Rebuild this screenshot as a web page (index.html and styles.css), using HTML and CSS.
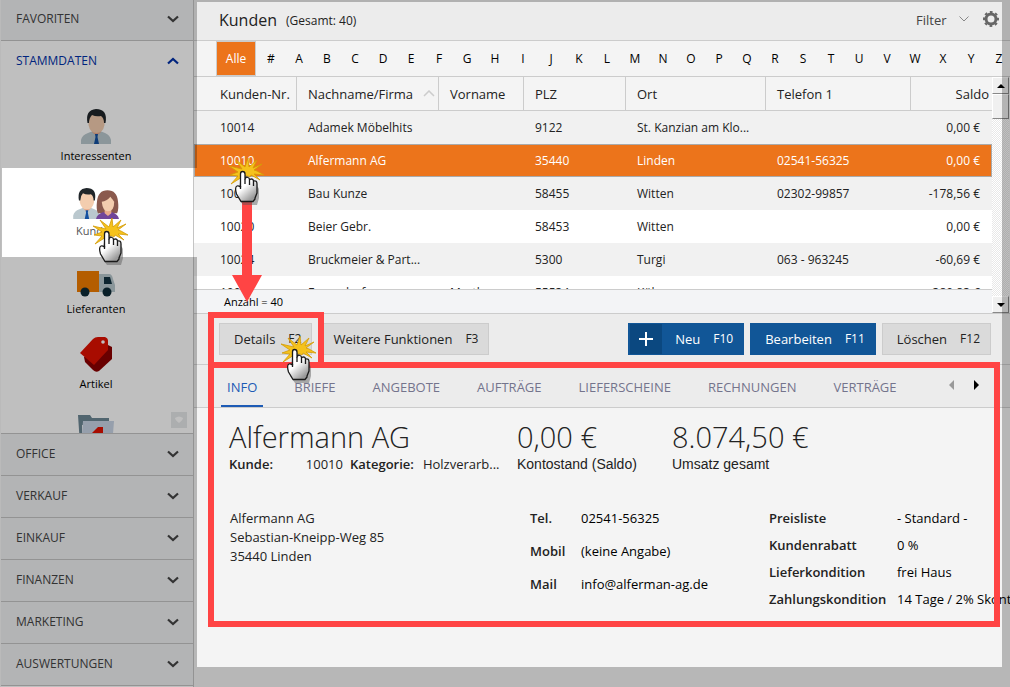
FILE: index.html
```html
<!DOCTYPE html>
<html lang="de">
<head>
    <meta charset="UTF-8">
    <meta name="viewport" content="width=device-width, initial-scale=1.0">
    <title>Kunden</title>
    <link rel="stylesheet" href="styles.css">
</head>
<body>
    <!-- Shared shapes -->
    <svg class="defs" width="0" height="0">
        <linearGradient id="glove" x1="0" y1="0" x2="0.600" y2="1">
            <stop offset="0.550" stop-color="#fff"/>
            <stop offset="1" stop-color="#999"/>
        </linearGradient>
        <symbol id="down" viewBox="0 0 12 8">
            <path d="M1 1.500 L6 6 L11 1.500" fill="none" stroke="currentColor" stroke-width="2.200"/>
        </symbol>
        <symbol id="man" viewBox="0 0 30 35">
            <path d="M0 35 V31 Q1 26 7 24 L12 22 H19 L24 24 Q29 26 30 31 V35 Z" fill="#bac8ce"/>
            <path d="M11 20 H20 V23 L15.500 27 L11 23 Z" fill="#e8a98a"/>
            <path d="M7.500 11 Q7.500 3 15 3 Q23.500 3 23.500 11 V16 Q22 24 15.500 24 Q9 24 7.500 16 Z" fill="#f3cdaf"/>
            <path d="M6.500 14 Q4 1 15 0 Q27 0 24.500 14 H23 Q23 9 20 7 Q15 8 11 6 Q8 9 8 14 Z" fill="#20262a"/>
            <path d="M14 25 H17 L16.500 28 L18 35 H13 L14.500 28 Z" fill="#1450a0"/>
        </symbol>
        <symbol id="woman" viewBox="0 0 24 30">
            <path d="M2 24 Q0 20 1 12 Q2 0 12 0 Q22 0 23 12 Q24 20 22 24 Z" fill="#8a594d"/>
            <path d="M0 30 Q1 25 7 23 H17 Q23 25 24 30 Z" fill="#71459a"/>
            <path d="M9 19 H16 V24 L12.500 27 L9 24 Z" fill="#e8a98a"/>
            <path d="M6 12 Q11 12 15 7 Q18 11 19 12 Q19 22 12.500 22 Q7 22 6 12 Z" fill="#f3cdaf"/>
        </symbol>
        <symbol id="pointer" viewBox="0 0 38 50">
            <path d="M14 11 L8 2 L17 9 L20 0 L21 9 L29 2 L25 10 L34 6 L26 12 L29 13 L36 17 L26 16 L32 22 L23 17 L22 19 L20 18 L15 18 L11 21 L3 26 L10 18 L2 17 L10 14 L1 8 Z" fill="#f5c21c" stroke="#d39a06" stroke-width="0.800"/>
            <path d="M12 17 Q15 12 18 17 V25 Q28 23 30 29 V38 L28 45 H14 L9 38 V32 Z" fill="#555" opacity="0.450" transform="translate(1 2)"/>
            <path d="M12.500 29 V16 Q12.500 13.500 14.500 13.500 Q17 13.500 17 16 V21 Q18 18.500 20 19.500 Q21.500 20 21.500 21.500 Q25 20 25.500 23 Q29 22 29 26 V35 L27 40 V41 L25 43.500 H13 L8.500 36 Q6.500 29 9 28 Q10.500 27.500 12.500 29 Z" fill="url(#glove)" stroke="#1a1a1a" stroke-width="1.300" stroke-linejoin="round"/>
            <path d="M17 21 V26 M21.500 21.500 V27 M25.500 23 V28 M12.500 28 V31" fill="none" stroke="#1a1a1a" stroke-width="1.300"/>
        </symbol>
    </svg>

    <div class="app">
        <nav class="sidebar">
            <button class="section first">FAVORITEN <svg><use href="#down"/></svg></button>
            <div class="group">
                <button class="section open">STAMMDATEN <svg><use href="#down"/></svg></button>
                <div class="items">
                    <a href="#" class="item">
                        <svg width="30" height="35"><use href="#man"/></svg>
                        <span>Interessenten</span>
                    </a>
                    <a href="#" class="item active">
                        <svg width="46" height="31" viewBox="0 0 46 31">
                            <use href="#man" x="0" y="0" width="27" height="31"/>
                            <use href="#woman" x="23" y="2" width="23" height="29"/>
                        </svg>
                        <span>Kunden</span>
                    </a>
                    <a href="#" class="item">
                        <svg width="38" height="26" viewBox="0 0 38 26">
                            <rect width="22" height="21" fill="#f07c00"/>
                            <path d="M22 3 H32 Q35 3 36 8 L38 14 V21 H22 Z" fill="#b9c8ce"/>
                            <path d="M27 6 H33 L35 13 H27 Z" fill="#12303f"/>
                            <circle cx="8" cy="21" r="4.500" fill="#0d2a36"/>
                            <circle cx="30" cy="21" r="4.500" fill="#0d2a36"/>
                        </svg>
                        <span>Lieferanten</span>
                    </a>
                    <a href="#" class="item">
                        <svg width="32" height="35" viewBox="0 0 32 35">
                            <path d="M4 20 L28 8 L32 10 V22 L19 34 Q16 36 13 33 L5 25 Z" fill="#8c0000"/>
                            <path d="M0 16 L13 2 Q15 0 18 0 H25 Q28 1 28 4 V13 L14 28 Z" fill="#e01000"/>
                            <circle cx="23" cy="5" r="1.800" fill="#fff"/>
                        </svg>
                        <span>Artikel</span>
                    </a>
                    <div class="item">
                        <svg width="36" height="35" viewBox="0 0 36 35">
                            <path d="M0 0 H12 L14 3 H31 V10 H4 V30 H2 Z" fill="#6c8794"/>
                            <path d="M5 6 H36 L34 32 H3 Z" fill="#c9d5e6"/>
                            <path d="M14 18 L20 12 H25 V18 L18 24 Z" fill="#e01000"/>
                        </svg>
                    </div>
                </div>
                <button class="more" aria-label="Mehr"><svg viewBox="0 0 16 16"><path d="M4 6 Q8 3 12 6 Q12 8 8 11 Q4 8 4 6" fill="#fff"/></svg></button>
            </div>
            <button class="section">OFFICE <svg><use href="#down"/></svg></button>
            <button class="section">VERKAUF <svg><use href="#down"/></svg></button>
            <button class="section">EINKAUF <svg><use href="#down"/></svg></button>
            <button class="section">FINANZEN <svg><use href="#down"/></svg></button>
            <button class="section">MARKETING <svg><use href="#down"/></svg></button>
            <button class="section">AUSWERTUNGEN <svg><use href="#down"/></svg></button>
        </nav>

        <main class="main">
            <header class="title-bar">
                <h1>Kunden</h1>
                <span class="total">(Gesamt: 40)</span>
                <button class="filter">Filter <svg width="10" height="6" viewBox="0 0 10 6"><path d="M0.500 0.500 L5 5 L9.500 0.500" fill="none" stroke="#888"/></svg></button>
                <button class="gear" aria-label="Einstellungen">
                    <svg width="16" height="16" viewBox="0 0 16 16">
                        <circle cx="8" cy="8" r="5" fill="none" stroke="#666" stroke-width="3"/>
                        <circle cx="8" cy="8" r="7" fill="none" stroke="#666" stroke-width="2" stroke-dasharray="2.750 2.748" stroke-dashoffset="1.375"/>
                    </svg>
                </button>
            </header>

            <div class="letters">
                <button class="all">Alle</button>
                <button>#</button><button>A</button><button>B</button><button>C</button><button>D</button><button>E</button><button>F</button><button>G</button><button>H</button><button>I</button><button>J</button><button>K</button><button>L</button><button>M</button><button>N</button><button>O</button><button>P</button><button>Q</button><button>R</button><button>S</button><button>T</button><button>U</button><button>V</button><button>W</button><button>X</button><button>Y</button><button>Z</button>
            </div>

            <div class="list">
                <div class="list-body">
                    <div class="rows">
                        <table>
                            <colgroup>
                                <col class="c-nr"><col class="c-name"><col class="c-first"><col class="c-zip"><col class="c-city"><col class="c-tel"><col>
                            </colgroup>
                            <thead>
                                <tr>
                                    <th>Kunden-Nr.</th>
                                    <th><div class="sorted">Nachname/Firma <svg width="12" height="7" viewBox="0 0 12 7"><path d="M1 6 L6 1 L11 6" fill="none" stroke="#ccc" stroke-width="1.500"/></svg></div></th>
                                    <th>Vorname</th><th>PLZ</th><th>Ort</th><th>Telefon 1</th><th>Saldo</th>
                                </tr>
                            </thead>
                            <tbody>
                                <tr><td>10014</td><td>Adamek Möbelhits</td><td></td><td>9122</td><td>St. Kanzian am Klo...</td><td></td><td>0,00 €</td></tr>
                                <tr class="selected"><td>10010</td><td>Alfermann AG</td><td></td><td>35440</td><td>Linden</td><td>02541-56325</td><td>0,00 €</td></tr>
                                <tr><td>10015</td><td>Bau Kunze</td><td></td><td>58455</td><td>Witten</td><td>02302-99857</td><td>-178,56 €</td></tr>
                                <tr><td>10020</td><td>Beier Gebr.</td><td></td><td>58453</td><td>Witten</td><td></td><td>0,00 €</td></tr>
                                <tr><td>10024</td><td>Bruckmeier &amp; Part...</td><td></td><td>5300</td><td>Turgi</td><td>063 - 963245</td><td>-60,69 €</td></tr>
                                <tr><td>10003</td><td>Enzendorfer</td><td>Martha</td><td>55534</td><td>Köln</td><td></td><td>-380,83 €</td></tr>
                            </tbody>
                        </table>
                    </div>
                    <div class="count">Anzahl = 40</div>
                </div>
                <div class="scrollbar">
                    <button aria-label="Nach oben"><svg width="8" height="4" viewBox="0 0 8 4"><path d="M0 4 L4 0 L8 4 Z"/></svg></button>
                    <div class="thumb"></div>
                    <button class="scroll-down" aria-label="Nach unten"><svg width="8" height="4" viewBox="0 0 8 4"><path d="M0 0 L4 4 L8 0 Z"/></svg></button>
                </div>
            </div>

            <div class="actions">
                <button class="btn">Details <kbd>F2</kbd></button>
                <button class="btn">Weitere Funktionen <kbd>F3</kbd></button>
                <button class="btn primary new"><span class="plus"><svg width="14" height="14" viewBox="0 0 14 14"><path d="M7 0 V14 M0 7 H14" stroke="#fff" stroke-width="2"/></svg></span>Neu <kbd>F10</kbd></button>
                <button class="btn primary">Bearbeiten <kbd>F11</kbd></button>
                <button class="btn">Löschen <kbd>F12</kbd></button>
            </div>

            <div class="tabs">
                <button class="current">INFO</button>
                <button>BRIEFE</button>
                <button>ANGEBOTE</button>
                <button>AUFTRÄGE</button>
                <button>LIEFERSCHEINE</button>
                <button>RECHNUNGEN</button>
                <button>VERTRÄGE</button>
                <div class="tab-nav">
                    <button aria-label="Zurück"><svg width="5" height="10" viewBox="0 0 5 10"><path d="M5 0 V10 L0 5 Z" fill="#999"/></svg></button>
                    <button aria-label="Weiter"><svg width="5" height="10" viewBox="0 0 5 10"><path d="M0 0 V10 L5 5 Z" fill="#000"/></svg></button>
                </div>
            </div>

            <section class="info">
                <div class="summary">
                    <div>
                        <h2>Alfermann AG</h2>
                        <p class="meta"><b>Kunde:</b><span class="number">10010</span><b>Kategorie:</b><span class="category">Holzverarb...</span></p>
                    </div>
                    <div>
                        <h2>0,00 €</h2>
                        <p class="caption">Kontostand (Saldo)</p>
                    </div>
                    <div>
                        <h2>8.074,50 €</h2>
                        <p class="caption">Umsatz gesamt</p>
                    </div>
                </div>
                <div class="details">
                    <address>Alfermann AG<br>Sebastian-Kneipp-Weg 85<br>35440 Linden</address>
                    <dl class="contact">
                        <dt>Tel.</dt><dd>02541-56325</dd>
                        <dt>Mobil</dt><dd>(keine Angabe)</dd>
                        <dt>Mail</dt><dd>info@alferman-ag.de</dd>
                    </dl>
                    <dl class="terms">
                        <dt>Preisliste</dt><dd>- Standard -</dd>
                        <dt>Kundenrabatt</dt><dd>0 %</dd>
                        <dt>Lieferkondition</dt><dd>frei Haus</dd>
                        <dt>Zahlungskondition</dt><dd>14 Tage / 2% Skonto</dd>
                    </dl>
                </div>
            </section>
        </main>

        <!-- Tutorial overlay: shade, frames, arrow and pointers -->
        <div class="shade"></div>
        <div class="frame frame-button"></div>
        <div class="frame frame-info"></div>
        <svg class="arrow" width="30" height="102" viewBox="0 0 30 102"><path d="M10 0 H20 V75 H30 L15 102 L0 75 H10 Z" fill="#ff4444"/></svg>
        <svg class="pointer on-menu" width="38" height="50"><use href="#pointer"/></svg>
        <svg class="pointer on-row" width="38" height="50"><use href="#pointer"/></svg>
        <svg class="pointer on-button" width="38" height="50"><use href="#pointer"/></svg>
    </div>
</body>
</html>
```

FILE: styles.css
```css
* {
    box-sizing: border-box;
}

body {
    margin: 0;
    background: #f4f4f4;
    color: #222;
    font-family: "Open Sans", "Noto Sans", sans-serif;
    font-size: 12px;
    line-height: 18px;
}

button {
    font: inherit;
    color: inherit;
    background: none;
    border: 0;
    padding: 0;
}

h1, h2, p, dl, dd {
    margin: 0;
}

.defs {
    position: absolute;
}

.app {
    position: relative;
    display: flex;
    min-height: 100vh;
    overflow: hidden;
}

/* Sidebar */
.sidebar {
    width: 194px;
    flex: none;
    display: flex;
    flex-direction: column;
    border-left: 1px solid #f8f8f8;
    border-right: 1px solid #c4c4c4;
    background: #fff;
}

.section {
    display: flex;
    align-items: center;
    justify-content: space-between;
    width: 100%;
    height: 42px;
    padding: 0 14px 2px 15px;
    border-bottom: 1px solid #c4c4c4;
    background: #eff0f2;
    color: #444;
}

.section svg {
    width: 12px;
    height: 8px;
}

.section.first {
    height: 41px;
}

.section.open {
    height: 39px;
    padding-bottom: 0;
    border: 0;
    background: none;
    color: #0030a8;
}

.section.open svg {
    transform: rotate(180deg);
}

.group {
    position: relative;
    height: 393px;
    overflow: hidden;
    border-bottom: 1px solid #c4c4c4;
}

.items {
    display: flex;
    flex-direction: column;
    gap: 16px;
    padding: 26px 2px 0 0;
}

.item {
    display: flex;
    flex-direction: column;
    align-items: center;
    gap: 3px;
    justify-content: flex-end;
    height: 59px;
    color: #000;
    font-size: 11px;
    text-decoration: none;
}

.item:last-child {
    justify-content: flex-start;
    padding-top: 6px;
}

.item.active {
    margin-bottom: 3px;
    color: #555;
}

.more {
    position: absolute;
    right: 6px;
    bottom: 5px;
    width: 16px;
    height: 16px;
    background: #e6e8ea;
}

.more svg {
    display: block;
}

/* Main */
.main {
    flex: 1;
    min-width: 0;
}

.title-bar {
    display: flex;
    align-items: center;
    height: 41px;
    padding: 0 11px 0 25px;
    background: #ececec;
    border-bottom: 1px solid #ccc;
}

.title-bar h1 {
    font-size: 16px;
    font-weight: 500;
}

.total {
    margin-left: 9px;
    padding-top: 2px;
}

.filter {
    margin-left: auto;
    color: #444;
    font-size: 13px;
}

.filter svg {
    margin: 0 0 3px 9px;
}

.gear {
    display: flex;
    margin-left: 14px;
    padding-bottom: 2px;
}

.letters {
    display: flex;
    height: 36px;
    padding-left: 22px;
    overflow: hidden;
    border-bottom: 1px solid #ccc;
}

.letters button {
    flex: none;
    width: 28px;
    color: #000;
}

.letters .all {
    width: 40px;
    margin-right: 1px;
    border: 1px solid #ccc;
    background: #ec741b;
    color: #fff;
}

/* Customer list */
.list {
    display: flex;
    padding-right: 1px;
    border-bottom: 1px solid #ccc;
}

.list-body {
    flex: 1;
    min-width: 0;
}

.rows {
    height: 212px;
    overflow: hidden;
}

table {
    width: 100%;
    table-layout: fixed;
    border-collapse: separate;
    border-spacing: 0;
}

.c-nr { width: 103px; }
.c-name { width: 142px; }
.c-first { width: 85px; }
.c-zip { width: 102px; }
.c-city { width: 140px; }
.c-tel { width: 145px; }

th {
    height: 34px;
    padding: 0 0 0 11px;
    border-right: 1px solid #ccc;
    border-bottom: 1px solid #ccc;
    font-size: 13px;
    font-weight: 500;
    text-align: left;
    white-space: nowrap;
}

th:first-child,
td:first-child {
    padding-left: 26px;
}

th:last-child {
    padding-right: 3px;
    border-right: 0;
    text-align: right;
}

.sorted {
    display: flex;
    align-items: center;
    justify-content: space-between;
    padding-right: 3px;
}

td {
    height: 33px;
    padding: 0 0 0 11px;
    white-space: nowrap;
}

td:last-child {
    padding-right: 12px;
    text-align: right;
}

tbody tr {
    background: #fff;
}

tbody tr:nth-child(odd) {
    background: #f1f1f1;
}

tbody .selected {
    background: #ec741b;
    color: #fff;
    outline: 1px solid #aaa;
    outline-offset: -1px;
}

.count {
    height: 24px;
    padding-left: 30px;
    border-top: 1px solid #ccc;
    background: #f3f4f6;
    color: #000;
    font-size: 11px;
    line-height: 24px;
}

.scrollbar {
    display: flex;
    flex-direction: column;
    width: 17px;
    background: repeating-conic-gradient(#fff 0 25%, #e8e8e8 0 50%) 0 0 / 2px 2px;
}

.scrollbar button,
.thumb {
    height: 17px;
    border: 1px solid #fff;
    border-right-color: #888;
    border-bottom-color: #888;
    background: #f0f0f0;
}

.scrollbar button {
    display: flex;
    align-items: center;
    justify-content: center;
}

.thumb {
    height: 25px;
}

.scrollbar .scroll-down {
    margin-top: auto;
}

/* Buttons */
.actions {
    display: flex;
    gap: 6px;
    height: 51px;
    padding: 9px 19px 9px 25px;
    border-bottom: 1px solid #ccc;
    background: #ececec;
}

.btn {
    display: flex;
    align-items: center;
    justify-content: space-between;
    gap: 13px;
    height: 32px;
    padding: 0 10px 0 14px;
    border: 1px solid #ccc;
    background: #dadada;
    font-size: 13px;
    font-weight: 500;
    white-space: nowrap;
}

.btn kbd {
    font-family: inherit;
    font-size: 12px;
    font-weight: 400;
}

.primary {
    border-color: #115697;
    background: #115697;
    color: #fff;
}

.new {
    margin-left: auto;
    padding-left: 1px;
}

.plus {
    display: flex;
    align-items: center;
    justify-content: center;
    width: 32px;
    height: 30px;
    background: #0b4880;
}

/* Tabs */
.tabs {
    display: flex;
    gap: 25px;
    height: 43px;
    padding-left: 27px;
    border-bottom: 1px solid #ccc;
    background: #ececec;
    color: #74748c;
}

.tabs > button {
    padding: 4px 6px 0;
    border-bottom: 2px solid transparent;
    font-size: 13px;
}

.tabs .current {
    border-color: #1d5bb5;
    color: #1d5bb5;
}

.tab-nav {
    display: flex;
    gap: 20px;
    margin-left: auto;
    padding-right: 31px;
}

/* Info */
.info {
    padding: 10px 0 0 35px;
}

.summary {
    display: flex;
}

.summary > div:nth-child(1) { width: 288px; }
.summary > div:nth-child(2) { width: 155px; }

h2 {
    font-size: 29px;
    font-weight: 300;
    line-height: 37px;
}

.meta {
    display: flex;
    font-size: 13px;
}

.meta b,
dt {
    font-weight: 600;
}

.number {
    width: 77px;
    padding-right: 7px;
    text-align: right;
}

.category {
    margin-left: 9px;
}

.caption {
    font-family: "Liberation Sans", sans-serif;
    font-size: 14px;
}

.details {
    display: grid;
    grid-template-columns: 301px 239px 1fr;
    padding-top: 36px;
}

address {
    padding-left: 1px;
    font-style: normal;
    font-size: 13px;
    line-height: 19px;
}

dl {
    display: grid;
    align-content: start;
    font-size: 13px;
    white-space: nowrap;
}

dd {
    color: #000;
}

.contact {
    grid-template-columns: 51px 1fr;
    row-gap: 15px;
}

.terms {
    grid-template-columns: 128px 1fr;
    row-gap: 9px;
}

/* Overlay */
.shade {
    position: absolute;
    inset: 0;
    background: rgba(0, 0, 0, 0.25);
    clip-path: polygon(evenodd,
        0 0, 100% 0, 100% 100%, 0 100%, 0 0,
        197px 2px, calc(100% - 8px) 2px,
        calc(100% - 8px) calc(100% - 20px), 197px calc(100% - 20px),
        197px 257px, 2px 257px, 2px 168px, 197px 168px, 197px 2px);
    pointer-events: none;
}

.frame {
    position: absolute;
    left: 208px;
    border: 6px solid #ff4444;
    pointer-events: none;
}

.frame-button {
    top: 312px;
    width: 116px;
    height: 56px;
}

.frame-info {
    top: 362px;
    right: 10px;
    height: 265px;
}

.arrow {
    position: absolute;
    top: 200px;
    left: 232px;
}

.pointer {
    position: absolute;
    pointer-events: none;
}

.on-menu {
    top: 218px;
    left: 92px;
}

.on-row {
    top: 158px;
    left: 228px;
}

.on-button {
    top: 336px;
    left: 280px;
}
```
